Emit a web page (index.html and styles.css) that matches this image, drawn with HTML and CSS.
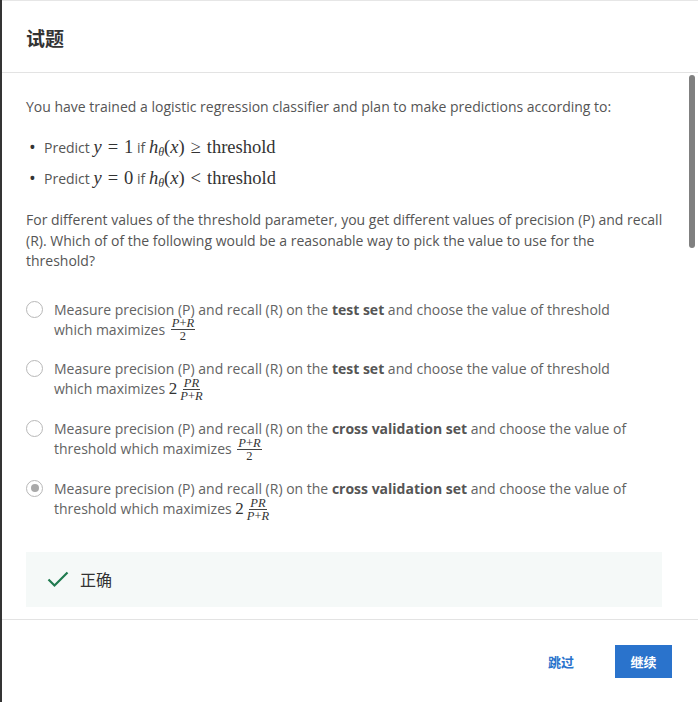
FILE: index.html
```html
<!DOCTYPE html>
<html lang="zh">
<head>
<meta charset="utf-8">
<title>试题</title>
<link rel="stylesheet" href="styles.css">
</head>
<body>
<div class="screen">
  <div class="edge"></div>
  <div class="modal">
    <header class="modal-header">
      <h2 class="title">试题</h2>
    </header>
    <div class="modal-body">
      <div class="content">
        <p class="q-text">You have trained a logistic regression classifier and plan to make predictions according to:</p>
        <ul class="rules">
          <li class="rule"><span class="dot">•</span><span>Predict <span class="m"><i>y</i><span class="rel">=</span>1</span> if <span class="m"><i>h</i><sub><i>θ</i></sub>(<i>x</i>)<span class="rel">≥</span>threshold</span></span></li>
          <li class="rule"><span class="dot">•</span><span>Predict <span class="m"><i>y</i><span class="rel">=</span>0</span> if <span class="m"><i>h</i><sub><i>θ</i></sub>(<i>x</i>)<span class="rel">&lt;</span>threshold</span></span></li>
        </ul>
        <p class="q-text q-para">For different values of the threshold parameter, you get different values of precision (P) and recall (R). Which of of the following would be a reasonable way to pick the value to use for the threshold?</p>
        <div class="options">
          <div class="option">
            <span class="radio"></span>
            <div class="opt-text">Measure precision (P) and recall (R) on the <b>test set</b> and choose the value of threshold which maximizes <span class="frac"><span class="num"><i>P</i>+<i>R</i></span><span class="den">2</span></span></div>
          </div>
          <div class="option">
            <span class="radio"></span>
            <div class="opt-text">Measure precision (P) and recall (R) on the <b>test set</b> and choose the value of threshold which maximizes <span class="m m-coef">2</span><span class="frac"><span class="num"><i>PR</i></span><span class="den"><i>P</i>+<i>R</i></span></span></div>
          </div>
          <div class="option">
            <span class="radio"></span>
            <div class="opt-text">Measure precision (P) and recall (R) on the <b>cross validation set</b> and choose the value of threshold which maximizes <span class="frac"><span class="num"><i>P</i>+<i>R</i></span><span class="den">2</span></span></div>
          </div>
          <div class="option">
            <span class="radio radio-checked"></span>
            <div class="opt-text">Measure precision (P) and recall (R) on the <b>cross validation set</b> and choose the value of threshold which maximizes <span class="m m-coef">2</span><span class="frac"><span class="num"><i>PR</i></span><span class="den"><i>P</i>+<i>R</i></span></span></div>
          </div>
        </div>
        <div class="feedback">
          <svg class="check" width="22" height="18" viewBox="0 0 22 18"><path d="M1.5 9.5 L7.5 15.5 L20.5 2.5" fill="none" stroke="#1f7a4f" stroke-width="2.2"/></svg>
          <span class="fb-text">正确</span>
        </div>
      </div>
      <div class="scrollbar"></div>
    </div>
    <footer class="modal-footer">
      <button class="btn-skip">跳过</button>
      <button class="btn-primary">继续</button>
    </footer>
  </div>
</div>
</body>
</html>
```
FILE: styles.css
```css
html, body {
  margin: 0;
  padding: 0;
  background: #fff;
}
body {
  font-family: "Open Sans", "Noto Sans CJK SC", sans-serif;
  width: 698px;
  height: 702px;
  overflow: hidden;
}
.screen {
  display: flex;
  height: 702px;
}
.edge {
  width: 2px;
  background: #343434;
  flex: none;
}
.modal {
  flex: 1;
  display: flex;
  flex-direction: column;
  border-top: 1px solid #e6e6e6;
  background: #fff;
  min-width: 0;
}
.modal-header {
  border-bottom: 1px solid #e3e3e3;
  display: flex;
  align-items: center;
  padding-left: 24px;
  box-sizing: border-box;
  height: 72px;
}
.title {
  margin: 0;
  font-family: "Noto Sans CJK SC", sans-serif;
  font-size: 19px;
  font-weight: 700;
  color: #333;
  position: relative;
  top: 1px;
}
.modal-body {
  position: relative;
  height: 546px;
  overflow: hidden;
}
.content {
  padding: 24px 36px 0 24px;
  color: #555;
  font-size: 14px;
  line-height: 20px;
}
.q-text {
  margin: 0;
}
.q-para {
  line-height: 20.5px;
  margin-top: 16px;
  margin-right: -3px;
}
.rules {
  list-style: none;
  margin: 15px 0 0 0;
  padding: 0;
}
.rule {
  display: flex;
  align-items: center;
  height: 31px;
  padding-left: 3px;
}
.dot {
  width: 15px;
  font-size: 18px;
  color: #333;
  position: relative;
  top: -1px;
}
.m {
  font-family: "Liberation Serif", "DejaVu Serif", serif;
  font-size: 18.5px;
  color: #333;
}
.m i, .frac i {
  font-family: "Liberation Serif", "DejaVu Serif", serif;
}
.m sub {
  font-size: 12px;
  vertical-align: -3px;
  line-height: 0;
}
.rel {
  margin: 0 6px;
}
.m-coef {
  font-size: 17px;
}
.options {
  margin-top: 28px;
  display: flex;
  flex-direction: column;
  gap: 19px;
}
.option {
  display: flex;
  align-items: flex-start;
  gap: 11px;
}
.radio {
  flex: none;
  width: 15px;
  height: 15px;
  border: 1.5px solid #b8b8b8;
  border-radius: 50%;
  margin-top: 1px;
  position: relative;
}
.radio-checked::after {
  content: "";
  position: absolute;
  left: 3.5px;
  top: 3.5px;
  width: 8px;
  height: 8px;
  border-radius: 50%;
  background: #a9a9a9;
}
.opt-text {
  color: #636363;
  line-height: 20px;
  max-width: 580px;
}
.opt-text b {
  color: #555;
  font-weight: 700;
}
.frac {
  display: inline-flex;
  flex-direction: column;
  align-items: center;
  vertical-align: middle;
  font-family: "Liberation Serif", "DejaVu Serif", serif;
  font-size: 12.5px;
  line-height: 12px;
  color: #333;
  margin-left: 2px;
  position: relative;
  top: -1px;
  margin-top: -3px;
  margin-bottom: -3px;
}
.num {
  padding: 0 1px;
  border-bottom: 1px solid #444;
}
.den {
  padding: 0 1px;
}
.feedback {
  margin-top: 32px;
  height: 55px;
  background: #f5f9f8;
  display: flex;
  align-items: center;
  padding-left: 21px;
}
.check {
  flex: none;
}
.fb-text {
  font-family: "Noto Sans CJK SC", sans-serif;
  font-size: 16px;
  color: #333;
  margin-left: 11px;
}
.scrollbar {
  position: absolute;
  right: 3px;
  top: 2px;
  width: 6px;
  height: 173px;
  border-radius: 3px;
  background: #808080;
}
.modal-footer {
  flex: 1;
  border-top: 1px solid #e3e3e3;
  display: flex;
  justify-content: flex-end;
  align-items: flex-start;
  padding: 25px 26px 0 0;
}
.btn-skip, .btn-primary {
  font-family: "Noto Sans CJK SC", sans-serif;
  font-size: 13px;
  font-weight: 700;
  border: none;
  cursor: pointer;
  height: 33px;
}
.btn-skip {
  background: none;
  color: #2a73cc;
  padding: 0 16px;
  margin-right: 25px;
}
.btn-primary {
  background: #2a73cc;
  color: #fff;
  width: 57px;
  padding: 0;
}
```
